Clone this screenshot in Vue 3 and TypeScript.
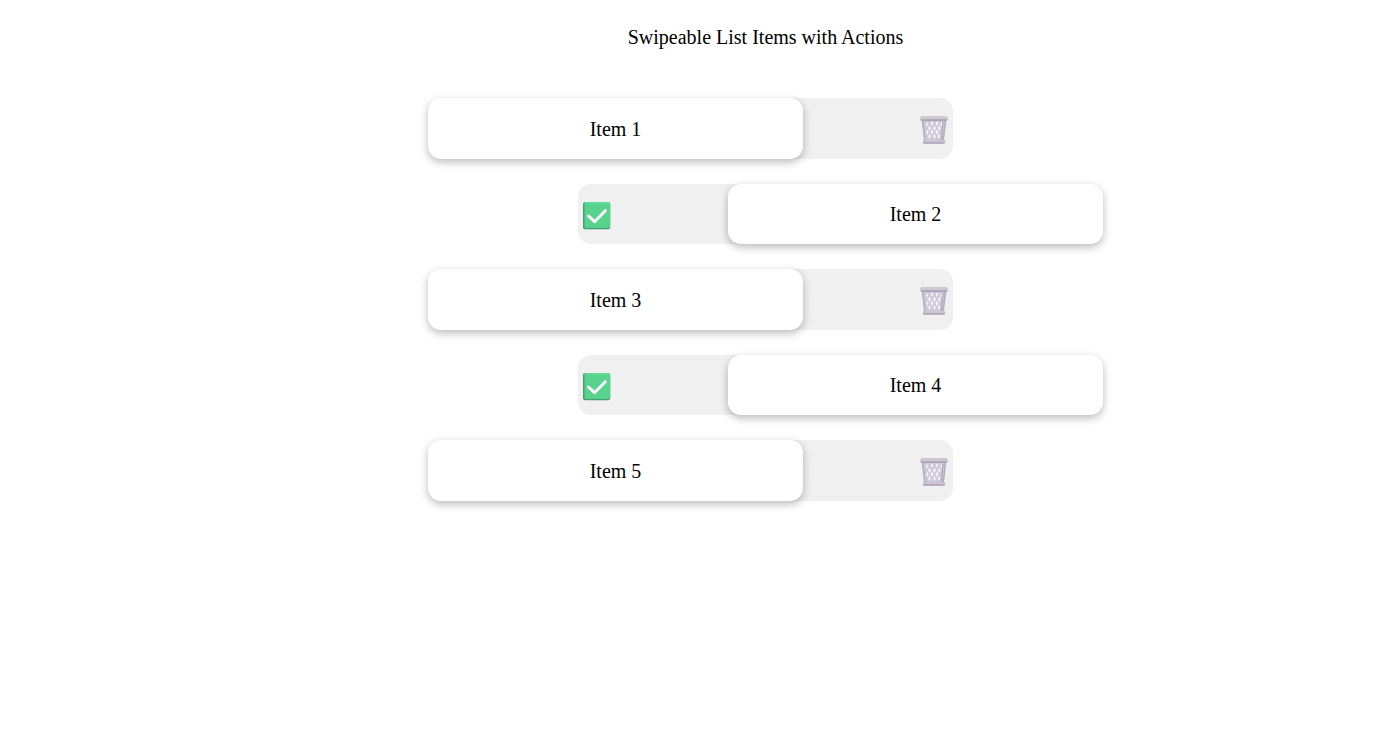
<script setup lang="ts">
import { ref } from 'vue'

interface Item {
  id: number
  label: string
  side: 'left' | 'right'
}

const items = ref<Item[]>([
  { id: 1, label: 'Item 1', side: 'left' },
  { id: 2, label: 'Item 2', side: 'right' },
  { id: 3, label: 'Item 3', side: 'left' },
  { id: 4, label: 'Item 4', side: 'right' },
  { id: 5, label: 'Item 5', side: 'left' },
])

function remove(id: number): void {
  items.value = items.value.filter((item) => item.id !== id)
}

function complete(item: Item): void {
  item.side = 'left'
}
</script>

<template>
  <main class="page">
    <h1 class="title">Swipeable List Items with Actions</h1>
    <ul class="list">
      <li v-for="item in items" :key="item.id" class="row" :class="item.side">
        <button
          v-if="item.side === 'left'"
          class="action"
          type="button"
          :aria-label="'Delete ' + item.label"
          @click="remove(item.id)"
        >
          <svg class="icon" viewBox="0 0 28 28" aria-hidden="true">
            <path d="M2 4H26L23.500 26H4.500Z" fill="#cdc7da" />
            <g fill="#f4f2f8">
              <path d="M7 6l1.300 2.200L7 10.400 5.800 8.200ZM12 5l1.400 2.400L12 9.800l-1.400-2.400ZM17 5l1.400 2.400L17 9.800l-1.400-2.400ZM21.500 6l1.100 2.200-1.100 2.200-1.200-2.200Z" />
              <path d="M9.500 9.500l1.500 2.700-1.500 2.700L8 12.200ZM14.500 9.500l1.500 2.700-1.500 2.700-1.500-2.700ZM19.300 9.500l1.400 2.700-1.400 2.700-1.400-2.700Z" />
              <path d="M7.300 13.500l1.300 2.700-1.300 2.700L6.200 16.200ZM12 13.500l1.500 2.700-1.500 2.700-1.500-2.700ZM17 13.500l1.500 2.700-1.500 2.700-1.500-2.700Z" />
              <path d="M9.500 18l1.400 2.500L9.500 23l-1.400-2.500ZM14.500 18l1.400 2.500-1.400 2.500-1.400-2.500ZM19 18l1.300 2.500L19 23l-1.300-2.500Z" />
            </g>
            <path d="M2.500 5L4.900 25M25.500 5L23.100 25" fill="none" stroke="#b3adbb" stroke-width="1.500" />
            <path d="M23 6L21.300 24" fill="none" stroke="#aaa3b3" stroke-width="1" />
            <rect x="0.500" y="0.500" width="27" height="4.500" rx="1.500" fill="#aaa2b8" />
            <rect x="0.500" y="0.500" width="27" height="2.800" rx="1.400" fill="#cbc9ce" />
            <rect x="3" y="24" width="22" height="3.800" rx="1.200" fill="#aa9dbb" />
            <rect x="3" y="24" width="22" height="2.200" rx="1" fill="#c9c6cd" />
          </svg>
        </button>
        <button
          v-else
          class="action"
          type="button"
          :aria-label="'Complete ' + item.label"
          @click="complete(item)"
        >
          <svg class="icon" viewBox="0 0 28 28" aria-hidden="true">
            <rect x="0" y="0" width="27.200" height="27.200" rx="2" fill="#459d74" />
            <rect x="1.500" y="0" width="25.700" height="26" rx="2" fill="#57d38d" />
            <path d="M2.500 1H26" stroke="#5edc94" stroke-width="2" stroke-linecap="round" />
            <path d="M5.500 14L11.500 19.700L22.300 8.700" fill="none" stroke="#faf3fb" stroke-width="3" stroke-linecap="round" stroke-linejoin="round" />
          </svg>
        </button>
        <div class="card">{{ item.label }}</div>
      </li>
    </ul>
  </main>
</template>

<style>
body {
  margin: 0;
  background: #fff;
}
</style>

<style scoped>
.page {
  display: flex;
  flex-direction: column;
  align-items: center;
  gap: 49px;
  padding: 25px 0 25px 133px;
  color: #000;
  font: 20px/24px "Liberation Serif", "Times New Roman", serif;
}

.title {
  margin: 0;
  font: inherit;
}

.list {
  display: flex;
  flex-direction: column;
  gap: 25px;
  width: 100%;
  max-width: 375px;
  margin: 0;
  padding: 0;
  list-style: none;
}

.row {
  display: grid;
  align-items: center;
  border-radius: 13px;
  background: #f0f0f0;
}

.left {
  min-height: 61px;
}

.right {
  min-height: 60px;
}

.action,
.card {
  grid-area: 1 / 1;
}

.action {
  display: flex;
  margin: 3px 5px 0;
  padding: 0;
  border: 0;
  background: none;
  cursor: pointer;
}

.left .action {
  justify-self: end;
}

.right .action {
  justify-self: start;
}

.icon {
  width: 28px;
  height: 28px;
}

.card {
  display: flex;
  align-items: center;
  justify-content: center;
  align-self: stretch;
  border-radius: 13px;
  background: #fff;
  box-shadow: 0 3px 9px rgba(0, 0, 0, 0.28);
}

.left .card {
  transform: translateX(-40%);
}

.right .card {
  transform: translateX(40%);
}
</style>
